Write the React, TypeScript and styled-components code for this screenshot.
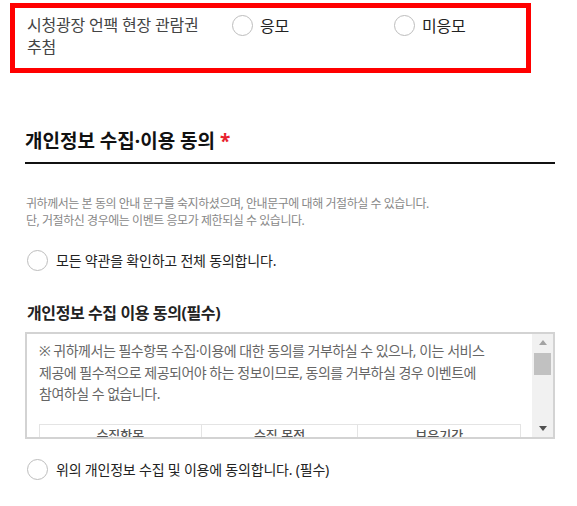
import React from "react";
import styled, { createGlobalStyle } from "styled-components";

const GlobalStyle = createGlobalStyle`
  html, body { margin: 0; padding: 0; background: #fff; }
  body {
    font-family: "Noto Sans", "Noto Sans CJK KR", sans-serif;
    color: #222;
    word-break: keep-all;
  }
  * { box-sizing: border-box; }
`;

const Page = styled.div`
  padding: 3px 0 30px 10px;
`;

const HighlightBox = styled.div`
  width: 521px;
  height: 70px;
  border: 5px solid #ff0000;
  padding: 6px 0 0 12px;
  display: grid;
  grid-template-columns: 205px 162px auto;
  align-items: start;
`;

const FieldLabel = styled.div`
  font-size: 16px;
  line-height: 22px;
  letter-spacing: -0.2px;
  color: #444;
  padding-right: 28px;
`;

const Option = styled.label`
  display: flex;
  align-items: center;
  gap: 7px;
  height: 22px;
  font-size: 16px;
  letter-spacing: -0.2px;
  color: #222;
`;

const Circle = styled.span`
  flex: none;
  width: 21px;
  height: 21px;
  border-radius: 50%;
  border: 1px solid #bdbdbd;
  background: #fff;
`;

const Section = styled.section`
  margin: 55px 0 0 15px;
  width: 530px;
`;

const Title = styled.h2`
  margin: 0;
  font-size: 19px;
  font-weight: 700;
  line-height: 26px;
  letter-spacing: 0;
  color: #111;
  padding-bottom: 8px;
  border-bottom: 2px solid #111;
`;

const Required = styled.span`
  color: #e8212d;
  margin-left: 5px;
`;

const Notice = styled.p`
  margin: 31px 0 0 1px;
  font-size: 12px;
  line-height: 17px;
  letter-spacing: -0.45px;
  color: #888;
`;

const AgreeRow = styled.label<{ $top: number }>`
  display: flex;
  align-items: center;
  gap: 8px;
  height: 22px;
  margin-top: ${(p) => p.$top}px;
  padding-left: 2px;
  font-size: 14px;
  letter-spacing: -0.2px;
  color: #222;
`;

const SubTitle = styled.h3`
  margin: 31px 0 0 2px;
  font-size: 16px;
  font-weight: 700;
  line-height: 22px;
  letter-spacing: -0.4px;
  color: #222;
`;

const ScrollBox = styled.div`
  margin-top: 8px;
  height: 107px;
  border: 2px solid #d3d3d3;
  display: flex;
  overflow: hidden;
`;

const ScrollContent = styled.div`
  flex: 1;
  overflow: hidden;
  padding: 6px 11px 0 12px;
`;

const TermsText = styled.p`
  margin: 0;
  font-size: 14px;
  line-height: 21.5px;
  letter-spacing: -0.5px;
  color: #666;
  white-space: nowrap;
`;

const TermsTable = styled.table`
  margin-top: 19px;
  width: 100%;
  border-collapse: collapse;
  table-layout: fixed;
`;

const HeadCell = styled.th`
  border: 1px solid #e4e4e4;
  padding: 1px 0 4px;
  font-size: 13px;
  font-weight: 500;
  line-height: 18px;
  color: #555;
  text-align: center;
`;

const ScrollBar = styled.div`
  flex: none;
  width: 21px;
  background: #f1f1f1;
  display: flex;
  flex-direction: column;
  align-items: center;
`;

const ArrowButton = styled.div<{ $down?: boolean }>`
  height: 17px;
  width: 100%;
  display: flex;
  align-items: center;
  justify-content: center;
  &::before {
    content: "";
    border-left: 4px solid transparent;
    border-right: 4px solid transparent;
    ${(p) =>
      p.$down
        ? "border-top: 5px solid #505050;"
        : "border-bottom: 5px solid #a3a3a3;"}
  }
`;

const Thumb = styled.div`
  margin-top: 2px;
  width: 17px;
  height: 22px;
  background: #c1c1c1;
`;

const Spacer = styled.div`
  flex: 1;
`;

export default function App() {
  return (
    <Page>
      <GlobalStyle />
      <HighlightBox>
        <FieldLabel>시청광장 언팩 현장 관람권 추첨</FieldLabel>
        <Option>
          <Circle />
          응모
        </Option>
        <Option>
          <Circle />
          미응모
        </Option>
      </HighlightBox>

      <Section>
        <Title>
          개인정보 수집·이용 동의<Required>*</Required>
        </Title>
        <Notice>
          귀하께서는 본 동의 안내 문구를 숙지하셨으며, 안내문구에 대해 거절하실 수 있습니다.
          <br />
          단, 거절하신 경우에는 이벤트 응모가 제한되실 수 있습니다.
        </Notice>
        <AgreeRow $top={20}>
          <Circle />
          모든 약관을 확인하고 전체 동의합니다.
        </AgreeRow>

        <SubTitle>개인정보 수집 이용 동의(필수)</SubTitle>
        <ScrollBox>
          <ScrollContent>
            <TermsText>
              ※ 귀하께서는 필수항목 수집·이용에 대한 동의를 거부하실 수 있으나, 이는 서비스
              <br />
              제공에 필수적으로 제공되어야 하는 정보이므로, 동의를 거부하실 경우 이벤트에
              <br />
              참여하실 수 없습니다.
            </TermsText>
            <TermsTable>
              <colgroup>
                <col style={{ width: "33.6%" }} />
                <col style={{ width: "32.6%" }} />
                <col />
              </colgroup>
              <thead>
                <tr>
                  <HeadCell>수집항목</HeadCell>
                  <HeadCell>수집 목적</HeadCell>
                  <HeadCell>보유기간</HeadCell>
                </tr>
              </thead>
            </TermsTable>
          </ScrollContent>
          <ScrollBar>
            <ArrowButton />
            <Thumb />
            <Spacer />
            <ArrowButton $down />
          </ScrollBar>
        </ScrollBox>

        <AgreeRow $top={19}>
          <Circle />
          위의 개인정보 수집 및 이용에 동의합니다. (필수)
        </AgreeRow>
      </Section>
    </Page>
  );
}
